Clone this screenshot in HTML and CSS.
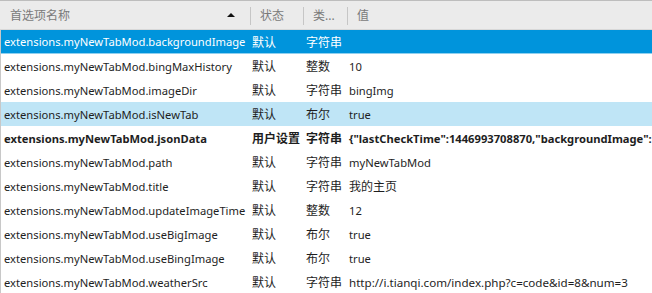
FILE: index.html
```
<!DOCTYPE html>
<html>
<head>
<meta charset="utf-8">
<link rel="stylesheet" href="styles.css">
</head>
<body>
<div class="tree">
  <div class="head">
    <div class="hcell hname">首选项名称<span class="sort"></span></div>
    <div class="hcell hsep">状态</div>
    <div class="hcell hsep">类...</div>
    <div class="hcell hsep">值</div>
  </div>
  <div class="rows">
    <div class="row selected"><span>extensions.myNewTabMod.backgroundImage</span><span>默认</span><span>字符串</span><span></span></div>
    <div class="row"><span>extensions.myNewTabMod.bingMaxHistory</span><span>默认</span><span>整数</span><span>10</span></div>
    <div class="row"><span>extensions.myNewTabMod.imageDir</span><span>默认</span><span>字符串</span><span>bingImg</span></div>
    <div class="row hover"><span>extensions.myNewTabMod.isNewTab</span><span>默认</span><span>布尔</span><span>true</span></div>
    <div class="row user"><span>extensions.myNewTabMod.jsonData</span><span>用户设置</span><span>字符串</span><span>{"lastCheckTime":1446993708870,"backgroundImage":"http://cn.bing.com/az/hprichbg.jpg"}</span></div>
    <div class="row"><span>extensions.myNewTabMod.path</span><span>默认</span><span>字符串</span><span>myNewTabMod</span></div>
    <div class="row"><span>extensions.myNewTabMod.title</span><span>默认</span><span>字符串</span><span class="cjk">我的主页</span></div>
    <div class="row"><span>extensions.myNewTabMod.updateImageTime</span><span>默认</span><span>整数</span><span>12</span></div>
    <div class="row"><span>extensions.myNewTabMod.useBigImage</span><span>默认</span><span>布尔</span><span>true</span></div>
    <div class="row"><span>extensions.myNewTabMod.useBingImage</span><span>默认</span><span>布尔</span><span>true</span></div>
    <div class="row"><span>extensions.myNewTabMod.weatherSrc</span><span>默认</span><span>字符串</span><span class="url">http://i.tianqi.com/index.php?c=code&amp;id=8&amp;num=3</span></div>
  </div>
</div>
</body>
</html>
```
FILE: styles.css
```
html, body {
  margin: 0;
  padding: 0;
  background: #ffffff;
  overflow: hidden;
}
body {
  width: 652px;
  height: 293px;
  font-family: "Noto Sans", "Noto Sans CJK SC", sans-serif;
  font-size: 11.2px;
  color: #1e1e1e;
}
.tree {
  display: flex;
  flex-direction: column;
}
.head {
  display: grid;
  grid-template-columns: 250px 53px 44px 1fr;
  height: 28px;
  background: #ebebeb;
  border-top: 1px solid #bdbdbd;
  border-bottom: 1px solid #d8d8d8;
  color: #7a7a7a;
  font-size: 12px;
  align-items: center;
}
.hcell {
  height: 28px;
  display: flex;
  align-items: center;
  white-space: nowrap;
  box-sizing: border-box;
}
.hname {
  padding-left: 10px;
  position: relative;
}
.hsep {
  padding-left: 10px;
  position: relative;
}
.hsep::before {
  content: "";
  position: absolute;
  left: 0;
  top: 6px;
  bottom: 4px;
  width: 1px;
  background: #c6c6c6;
}
.sort {
  position: absolute;
  left: 227px;
  top: 12px;
  width: 0;
  height: 0;
  border-left: 4px solid transparent;
  border-right: 4px solid transparent;
  border-bottom: 4px solid #111;
}
.rows {
  border-left: 1px solid #c8c8c8;
  display: flex;
  flex-direction: column;
}
.row {
  display: grid;
  grid-template-columns: 249px 54px 43px 1fr;
  height: 24px;
  align-items: center;
  white-space: nowrap;
}
.row span {
  overflow: hidden;
}
.row span:first-child {
  padding-left: 3px;
}
.row span:nth-child(2),
.row span:nth-child(3) {
  padding-left: 2px;
  font-size: 12px;
}
.row span:nth-child(4) {
  padding-left: 2px;
}
.row span.cjk {
  font-size: 12px;
}
.row span.url {
  font-size: 11.6px;
}
.row.selected {
  background: #0094dc;
  color: #ffffff;
  height: 23px;
  border-bottom: 1px solid #8fd0ef;
}
.row.hover {
  background: #bfe5f6;
}
.row.user {
  font-weight: bold;
}
```
